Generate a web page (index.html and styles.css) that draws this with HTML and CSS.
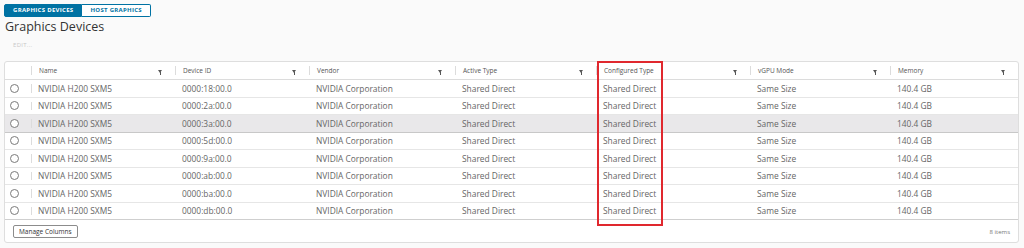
FILE: index.html
```html
<!DOCTYPE html>
<html>
<head>
<meta charset="utf-8">
<link rel="stylesheet" href="styles.css">
</head>
<body>
<div class="page">
  <div class="tabs">
    <span class="tab active">GRAPHICS DEVICES</span><span class="tab">HOST GRAPHICS</span>
  </div>
  <h1 class="title">Graphics Devices</h1>
  <div class="edit">EDIT...</div>
  <div class="card">
    <div class="row head">
      <div class="cell sel"></div>
      <div class="cell hc"><span>Name</span><i class="flt"></i></div>
      <div class="cell hc"><span>Device ID</span><i class="flt"></i></div>
      <div class="cell hc"><span>Vendor</span><i class="flt"></i></div>
      <div class="cell hc"><span>Active Type</span><i class="flt"></i></div>
      <div class="cell hc"><span>Configured Type</span><i class="flt"></i></div>
      <div class="cell hc"><span>vGPU Mode</span><i class="flt"></i></div>
      <div class="cell hc"><span>Memory</span><i class="flt"></i></div>
    </div>
    <div class="row"><div class="cell sel"><i class="radio"></i></div><div class="cell name">NVIDIA H200 SXM5</div><div class="cell">0000:18:00.0</div><div class="cell">NVIDIA Corporation</div><div class="cell">Shared Direct</div><div class="cell">Shared Direct</div><div class="cell">Same Size</div><div class="cell">140.4 GB</div></div>
    <div class="row"><div class="cell sel"><i class="radio"></i></div><div class="cell name">NVIDIA H200 SXM5</div><div class="cell">0000:2a:00.0</div><div class="cell">NVIDIA Corporation</div><div class="cell">Shared Direct</div><div class="cell">Shared Direct</div><div class="cell">Same Size</div><div class="cell">140.4 GB</div></div>
    <div class="row hover"><div class="cell sel"><i class="radio"></i></div><div class="cell name">NVIDIA H200 SXM5</div><div class="cell">0000:3a:00.0</div><div class="cell">NVIDIA Corporation</div><div class="cell">Shared Direct</div><div class="cell">Shared Direct</div><div class="cell">Same Size</div><div class="cell">140.4 GB</div></div>
    <div class="row"><div class="cell sel"><i class="radio"></i></div><div class="cell name">NVIDIA H200 SXM5</div><div class="cell">0000:5d:00.0</div><div class="cell">NVIDIA Corporation</div><div class="cell">Shared Direct</div><div class="cell">Shared Direct</div><div class="cell">Same Size</div><div class="cell">140.4 GB</div></div>
    <div class="row"><div class="cell sel"><i class="radio"></i></div><div class="cell name">NVIDIA H200 SXM5</div><div class="cell">0000:9a:00.0</div><div class="cell">NVIDIA Corporation</div><div class="cell">Shared Direct</div><div class="cell">Shared Direct</div><div class="cell">Same Size</div><div class="cell">140.4 GB</div></div>
    <div class="row"><div class="cell sel"><i class="radio"></i></div><div class="cell name">NVIDIA H200 SXM5</div><div class="cell">0000:ab:00.0</div><div class="cell">NVIDIA Corporation</div><div class="cell">Shared Direct</div><div class="cell">Shared Direct</div><div class="cell">Same Size</div><div class="cell">140.4 GB</div></div>
    <div class="row"><div class="cell sel"><i class="radio"></i></div><div class="cell name">NVIDIA H200 SXM5</div><div class="cell">0000:ba:00.0</div><div class="cell">NVIDIA Corporation</div><div class="cell">Shared Direct</div><div class="cell">Shared Direct</div><div class="cell">Same Size</div><div class="cell">140.4 GB</div></div>
    <div class="row last"><div class="cell sel"><i class="radio"></i></div><div class="cell name">NVIDIA H200 SXM5</div><div class="cell">0000:db:00.0</div><div class="cell">NVIDIA Corporation</div><div class="cell">Shared Direct</div><div class="cell">Shared Direct</div><div class="cell">Same Size</div><div class="cell">140.4 GB</div></div>
    <div class="footer">
      <button class="btn">Manage Columns</button>
      <span class="count">8 items</span>
    </div>
    <div class="highlight"></div>
  </div>
</div>
</body>
</html>
```

FILE: styles.css
```css
* { box-sizing: border-box; }
html, body { margin: 0; padding: 0; }
body {
  background: #fafafa;
  font-family: "Open Sans", "Liberation Sans", sans-serif;
  color: #666;
  width: 1024px;
  height: 248px;
  overflow: hidden;
}
.page { padding: 4px 5px 0 4px; }
.tabs { display: flex; height: 13px; }
.tab {
  font-size: 6px;
  font-weight: 700;
  letter-spacing: 0.3px;
  color: #0072a3;
  border: 1px solid #0072a3;
  background: #fff;
  padding: 0 8px;
  line-height: 11px;
  height: 13px;
}
.tab:first-child { border-radius: 2px 0 0 2px; }
.tab:last-child { border-radius: 0 2px 2px 0; border-left: none; }
.tab.active { background: #0072a3; color: #fff; }
.title {
  margin: 1px 0 0 1px;
  font-size: 12.5px;
  font-weight: 400;
  color: #333;
  line-height: 18px;
}
.edit {
  margin: 4px 0 0 9px;
  font-size: 6px;
  color: #c8c8c8;
  height: 10px;
  line-height: 10px;
  letter-spacing: 0.3px;
}
.card {
  position: relative;
  margin-top: 11px;
  background: #fff;
  border: 1px solid #dedede;
  border-radius: 3px;
  height: 182px;
}
.row {
  display: grid;
  grid-template-columns: 26px 144px 134px 146px 141px 154px 140px 1fr;
  height: 17.5px;
  border-bottom: 1px solid #e6e6e6;
  font-size: 8.4px;
  align-items: center;
}
.row.head { height: 18px; border-bottom: 1px solid #dcdcdc; }
.row.hover { background: #e9e8ea; border-bottom-color: #c8c8c8; }
.row.last { border-bottom: 1px solid #cfcfcf; }
.cell {
  position: relative;
  height: 100%;
  display: flex;
  align-items: center;
  padding-left: 7px;
  white-space: nowrap;
}
.cell.sel { padding-left: 4px; }
.cell.name::before, .hc::before {
  content: "";
  position: absolute;
  left: 0;
  top: 4px;
  bottom: 4px;
  border-left: 1px solid #dcdcdc;
}
.cell.name { padding-left: 7px; }
.hc { font-size: 6.5px; color: #555; padding-left: 8px; }
.hc span { flex: 1; }
.flt {
  width: 0; height: 0;
  border-left: 2.5px solid transparent;
  border-right: 2.5px solid transparent;
  border-top: 3px solid #555;
  margin-right: 13px;
  position: relative;
  top: 1px;
}
.flt::after {
  content: "";
  position: absolute;
  left: -0.5px;
  top: -1px;
  width: 1px;
  height: 3px;
  background: #555;
}
.radio {
  width: 9px; height: 9px;
  border: 1px solid #7a7a7a;
  border-radius: 50%;
  background: #fff;
  margin-left: 1px;
}
.footer {
  display: flex;
  align-items: center;
  justify-content: space-between;
  padding: 0 8px 0 8px;
  height: 23px;
}
.btn {
  font-family: inherit;
  font-size: 6.5px;
  color: #333;
  background: #fff;
  border: 1px solid #8c8c8c;
  border-radius: 2px;
  height: 13px;
  padding: 0 5px;
  line-height: 11px;
}
.count { font-size: 6px; color: #777; }
.highlight {
  position: absolute;
  left: 592px;
  top: -1px;
  width: 66px;
  height: 165px;
  border: 2px solid #e0282e;
}
```
